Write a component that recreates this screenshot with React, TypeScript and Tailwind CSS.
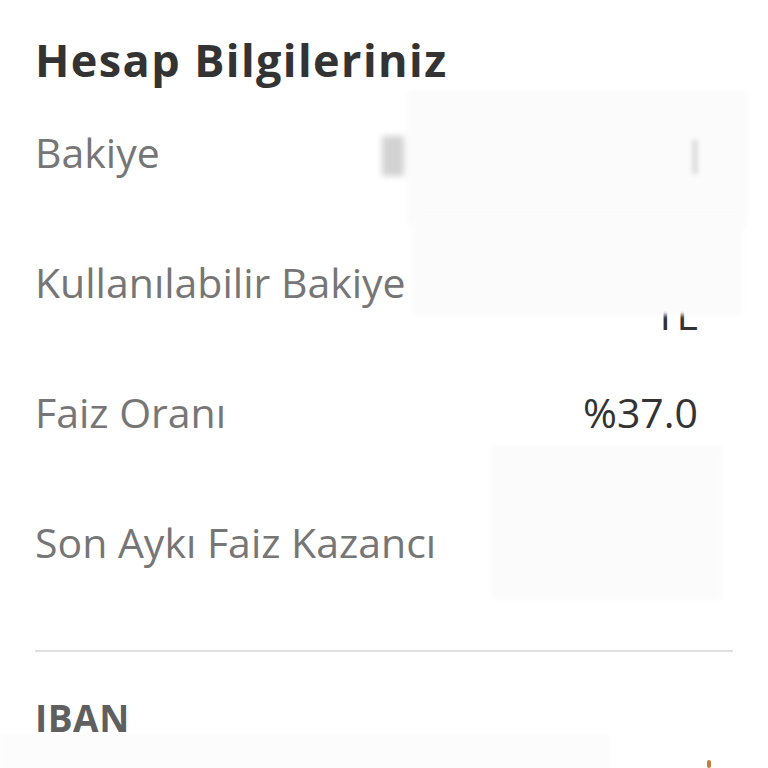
import React from "react";

const rows = [
  { label: "Bakiye", value: ["00.000,00 TL"] },
  { label: "Kullanılabilir Bakiye", value: ["00.000,00", "TL"] },
  { label: "Faiz Oranı", value: ["%37.0"] },
  { label: "Son Aykı Faiz Kazancı", value: ["000,00 TL"] },
];

export default function App() {
  return (
    <div
      className="relative w-[768px] h-[768px] overflow-hidden bg-white"
      style={{ fontFamily: "'Open Sans', Lato, sans-serif" }}
    >
      <div className="px-[35px] pt-[34px]">
        <h1 className="text-[45px] leading-[52px] font-bold text-[#333333] tracking-[1.4px]">
          Hesap Bilgileriniz
        </h1>

        <div className="mt-[1px]">
          {rows.map((r) => (
            <div key={r.label} className="flex h-[130px] items-center justify-between pr-[35px]">
              <span className="text-[41px] text-[#767676] leading-[58px]">{r.label}</span>
              <div
                className={
                  r.value.length > 1
                    ? "mt-[6px] flex flex-col items-end text-[41px] text-[#333333] leading-[58px]"
                    : "flex flex-col items-end text-[41px] text-[#333333] leading-[58px]"
                }
              >
                {r.value.map((v) => (
                  <span key={v}>{v}</span>
                ))}
              </div>
            </div>
          ))}
        </div>

        <div className="mt-[43px] h-[2px] bg-[#e0e0e0]" />

        <div className="mt-[46px] text-[37px] font-bold text-[#5f5f5f] leading-[40px] tracking-[0.5px]">
          IBAN
        </div>
      </div>

      {/* redaction overlays */}
      <div className="absolute left-[407px] top-[90px] w-[340px] h-[135px] bg-[#fbfbfb] blur-[2px]" />
      <div className="absolute left-[413px] top-[215px] w-[330px] h-[100px] bg-[#fbfbfb] blur-[2px]" />
      <div className="absolute left-[382px] top-[136px] w-[22px] h-[40px] bg-[#d2d2d2] blur-[3px]" />
      <div className="absolute left-[692px] top-[140px] w-[6px] h-[34px] bg-[#dddddd] blur-[2px]" />
      <div className="absolute left-[491px] top-[446px] w-[231px] h-[154px] bg-[#fbfbfb] blur-[2px]" />
      <div className="absolute left-0 top-[734px] w-[610px] h-[40px] bg-[#fcfcfc] blur-[1px]" />
      <div className="absolute left-[610px] top-[740px] w-[158px] h-[40px] bg-white" />
      <div className="absolute left-[707px] top-[760px] w-[4px] h-[8px] bg-[#c08040] rounded-sm" />
    </div>
  );
}
